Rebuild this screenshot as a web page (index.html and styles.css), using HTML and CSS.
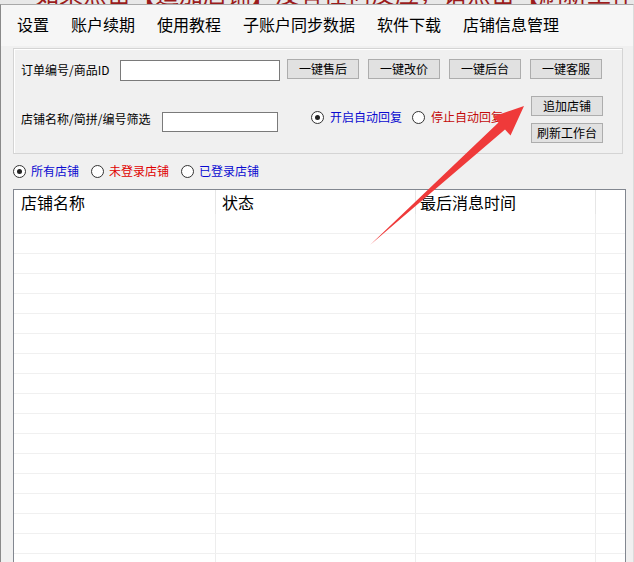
FILE: index.html
```html
<!DOCTYPE html>
<html lang="zh-CN">
<head>
    <meta charset="UTF-8">
    <meta name="viewport" content="width=device-width, initial-scale=1.0">
    <title>店铺工作台</title>
    <link rel="stylesheet" href="styles.css">
</head>
<body>
    <div class="notice"><span class="notice-text">如果点击【追加店铺】没有任何反应，请点击【刷新工作台】后再试</span></div>
    <div class="window">
        <ul class="menubar">
            <li>设置</li>
            <li>账户续期</li>
            <li>使用教程</li>
            <li>子账户同步数据</li>
            <li>软件下载</li>
            <li>店铺信息管理</li>
        </ul>

        <div class="panel">
            <div class="row row-search">
                <label class="field-label label-order">订单编号/商品ID</label>
                <input type="text" class="input input-order">
                <div class="actions">
                    <button class="btn">一键售后</button>
                    <button class="btn">一键改价</button>
                    <button class="btn">一键后台</button>
                    <button class="btn">一键客服</button>
                </div>
            </div>
            <div class="row row-shop">
                <label class="field-label label-shop">店铺名称/简拼/编号筛选</label>
                <input type="text" class="input input-shop">
                <div class="options reply-options">
                    <span class="radio checked blue"><i class="circle"></i>开启自动回复</span>
                    <span class="radio dark-red"><i class="circle"></i>停止自动回复</span>
                </div>
                <div class="side-buttons">
                    <button class="btn">追加店铺</button>
                    <button class="btn">刷新工作台</button>
                </div>
            </div>
        </div>

        <div class="options filters">
            <span class="radio checked blue"><i class="circle"></i>所有店铺</span>
            <span class="radio red"><i class="circle"></i>未登录店铺</span>
            <span class="radio blue"><i class="circle"></i>已登录店铺</span>
        </div>

        <div class="grid">
            <div class="grid-head">
                <div class="cell col-name">店铺名称</div>
                <div class="cell col-state">状态</div>
                <div class="cell col-time">最后消息时间</div>
                <div class="cell col-rest"></div>
            </div>
            <div class="grid-body" id="grid-body"></div>
        </div>
    </div>

    <svg class="pointer-arrow" width="634" height="562" viewBox="0 0 634 562">
        <polygon points="370,245 498.5,122.5 493.5,116.5 524,106 510.5,135.5 505,129.5" fill="#ef3a3a"/>
    </svg>

    <script>
        // empty rows so the list shows its grid lines
        const body = document.getElementById('grid-body');
        for (let i = 0; i < 18; i++) {
            const row = document.createElement('div');
            row.className = 'grid-row';
            row.innerHTML = '<div class="cell col-name"></div><div class="cell col-state"></div>' +
                '<div class="cell col-time"></div><div class="cell col-rest"></div>';
            body.appendChild(row);
        }
    </script>
</body>
</html>
```

FILE: styles.css
```css
body {
    margin: 0;
    background-color: #e8e8e8;
    font-family: "Noto Sans CJK SC", "Noto Sans", sans-serif;
    color: #000;
    height: 562px;
    overflow: hidden;
    position: relative;
}
.notice {
    height: 4px;
    overflow: hidden;
    padding-left: 35px;
    color: #9b1c1c;
    font-size: 24px;
    line-height: 24px;
    white-space: nowrap;
}
.notice-text {
    display: block;
    margin-top: -19px;
}
.window {
    height: 558px;
    box-sizing: border-box;
    background-color: #f0f0f0;
    border-top: 1px solid #a8a8a8;
    border-left: 1px solid #8a8a8a;
    border-right: 1px solid #dcdcdc;
}
.menubar {
    display: flex;
    align-items: center;
    height: 38px;
    margin: 0;
    padding: 0 0 3px 5px;
    list-style: none;
    background-color: #f6f6f6;
}
.menubar li {
    padding: 0 11px;
    font-size: 16px;
    line-height: 16px;
}
.panel {
    width: 610px;
    box-sizing: border-box;
    margin: 2px 0 0 12px;
    padding: 10px 19px 10px 7px;
    border: 1px solid #d4d4d4;
    box-shadow: inset 1px 1px 0 #fff;
}
.row {
    display: flex;
    align-items: flex-start;
}
.row-shop {
    margin-top: 15px;
}
.field-label {
    font-size: 12px;
    line-height: 14px;
    white-space: nowrap;
}
.label-order {
    width: 99px;
    margin-top: 4px;
}
.label-shop {
    width: 141px;
    margin-top: 16px;
}
.input {
    box-sizing: border-box;
    border: 1px solid #7a7a7a;
    background-color: #fff;
    padding: 0;
}
.input-order {
    width: 160px;
    height: 21px;
    margin-top: 1px;
}
.input-shop {
    width: 116px;
    height: 20px;
    margin-top: 16px;
}
.actions {
    display: flex;
    gap: 9px;
    margin-left: 7px;
}
.btn {
    width: 72px;
    height: 20px;
    box-sizing: border-box;
    padding: 0;
    border: 1px solid #adadad;
    background-color: #e1e1e1;
    font-family: inherit;
    font-size: 12px;
    line-height: 18px;
    color: #000;
}
.side-buttons {
    display: flex;
    flex-direction: column;
    gap: 7px;
    margin-left: auto;
}
.options {
    display: flex;
    gap: 12px;
    font-size: 12px;
    line-height: 14px;
}
.reply-options {
    gap: 10px;
    margin: 14px 0 0 33px;
}
.radio {
    display: flex;
    align-items: center;
    gap: 5px;
    white-space: nowrap;
}
.reply-options .radio {
    gap: 6px;
}
.circle {
    width: 13px;
    height: 13px;
    box-sizing: border-box;
    border: 1px solid #333;
    border-radius: 50%;
    background-color: #fff;
    position: relative;
}
.radio.checked .circle::after {
    content: "";
    position: absolute;
    left: 3px;
    top: 3px;
    width: 5px;
    height: 5px;
    border-radius: 50%;
    background-color: #222;
}
.blue {
    color: #0a0ad0;
}
.red {
    color: #e00000;
}
.dark-red {
    color: #c40a0a;
}
.filters {
    margin: 10px 0 0 12px;
}
.grid {
    width: 613px;
    height: 400px;
    box-sizing: border-box;
    margin: 11px 0 0 12px;
    border: 1px solid #828790;
    border-bottom: none;
    background-color: #fff;
}
.grid-head, .grid-row {
    display: flex;
}
.grid-head {
    height: 24px;
    font-size: 16px;
    line-height: 24px;
}
.grid-row {
    height: 20px;
    box-sizing: border-box;
    border-bottom: 1px solid #f0f0f0;
}
.cell {
    box-sizing: border-box;
    padding-left: 6px;
    border-right: 1px solid #ededed;
    white-space: nowrap;
}
.grid-head .cell {
    border-right-color: #e6e6e6;
}
.col-name {
    width: 202px;
    padding-left: 7px;
}
.col-state {
    width: 200px;
}
.col-time {
    width: 180px;
    padding-left: 4px;
}
.col-rest {
    flex: 1;
    border-right: none;
}
.pointer-arrow {
    position: absolute;
    left: 0;
    top: 0;
    pointer-events: none;
}
```
